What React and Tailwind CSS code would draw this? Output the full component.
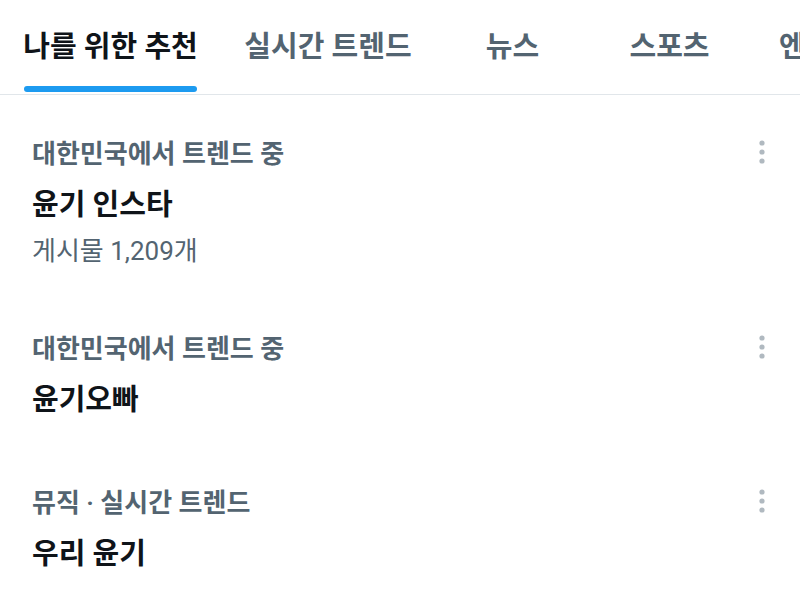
import React from 'react';

const tabs = [
  { label: '나를 위한 추천', w: 'w-[221px]', active: true },
  { label: '실시간 트렌드', w: 'w-[214px]' },
  { label: '뉴스', w: 'w-[155px]' },
  { label: '스포츠', w: 'w-[159px]' },
  { label: '엔터테인먼트', w: 'w-[220px]' },
];

const trends = [
  { category: '대한민국에서 트렌드 중', title: '윤기 인스타', posts: '게시물 1,209개' },
  { category: '대한민국에서 트렌드 중', title: '윤기오빠' },
  { category: '뮤직 · 실시간 트렌드', title: '우리 윤기' },
];

const MoreIcon = () => (
  <svg width="8" height="26" viewBox="0 0 8 26" className="fill-[#b0b9c0]">
    <circle cx="4" cy="4" r="2.6" />
    <circle cx="4" cy="13" r="2.6" />
    <circle cx="4" cy="22" r="2.6" />
  </svg>
);

export default function App() {
  return (
    <div
      className="w-[800px] h-[605px] overflow-hidden bg-white"
      style={{ fontFamily: 'Roboto, "Noto Sans CJK KR", sans-serif' }}
    >
      {/* Tabs */}
      <div className="flex h-[95px] border-b border-[#e1e6ea] overflow-hidden">
        {tabs.map((t) => (
          <div key={t.label} className={`${t.w} shrink-0 flex flex-col items-center`}>
            <div
              className={`pt-[26px] h-[86px] text-[29px] whitespace-nowrap ${
                t.active ? 'font-bold text-[#0f1419]' : 'font-semibold text-[#536471]'
              }`}
            >
              {t.label}
            </div>
            {t.active && <div className="w-[173px] h-[6px] rounded-full bg-[#1d9bf0]" />}
          </div>
        ))}
      </div>

      {/* Trends */}
      <div className="flex flex-col">
        {trends.map((t, i) => (
          <div key={i} className="flex justify-between pl-8 pr-[34px] pt-[41px] pb-[24px]">
            <div className="flex flex-col">
              <div className="text-[26px] leading-[36px] font-semibold text-[#536471]">{t.category}</div>
              <div className="mt-[13px] text-[29px] leading-[40px] font-bold text-[#0f1419]">{t.title}</div>
              {t.posts && (
                <div className="mt-[11px] text-[26px] leading-[30px] text-[#536471]">{t.posts}</div>
              )}
            </div>
            <div className="pt-[3px]">
              <MoreIcon />
            </div>
          </div>
        ))}
      </div>
    </div>
  );
}
